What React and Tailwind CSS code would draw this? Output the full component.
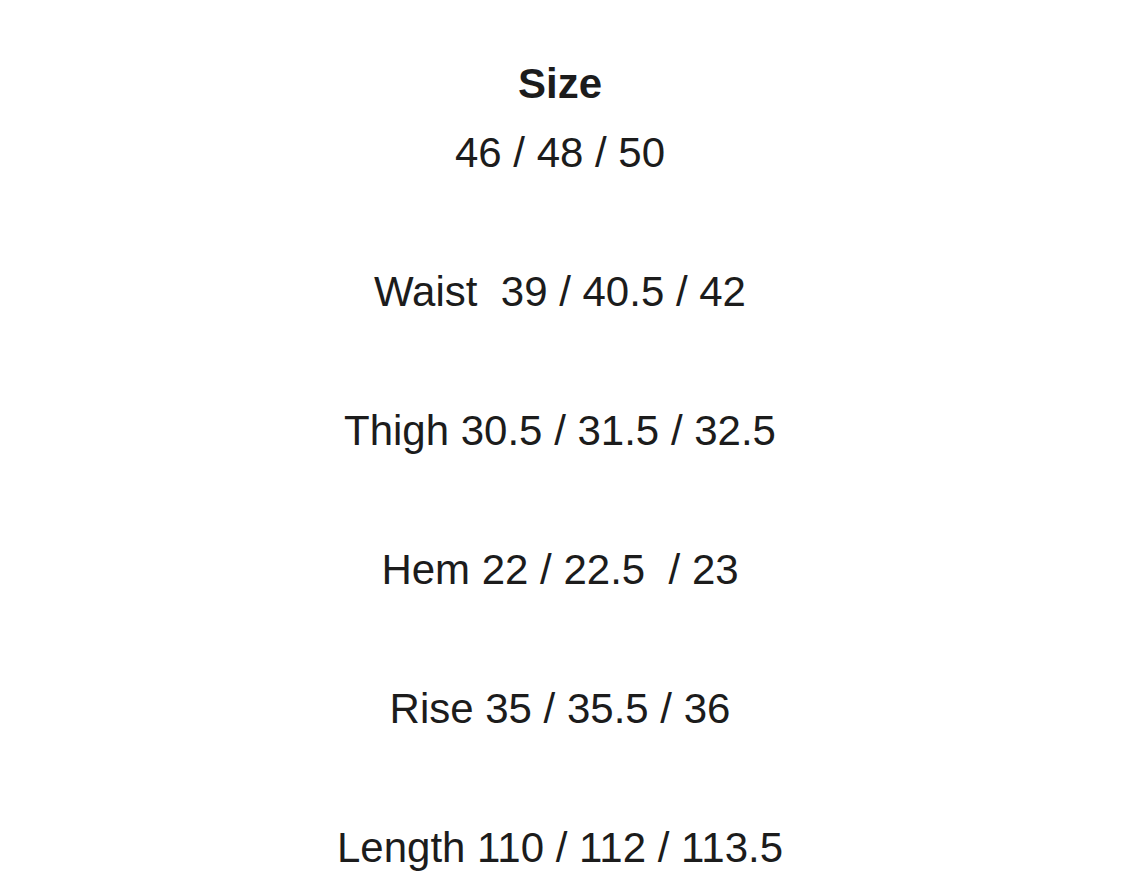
const rows = [
  "Waist  39 / 40.5 / 42",
  "Thigh 30.5 / 31.5 / 32.5",
  "Hem 22 / 22.5  / 23",
  "Rise 35 / 35.5 / 36",
  "Length 110 / 112 / 113.5",
];

export default function App() {
  return (
    <div className="min-h-[875px] w-full bg-white pt-[49px] pr-[5px] text-center text-[42px] leading-[69px] text-[#1c1c1c] font-['Liberation_Sans',Arial,sans-serif]">
      <div className="font-bold">Size</div>
      <div>46 / 48 / 50</div>
      {rows.map((row) => (
        <div key={row} className="mt-[70px] whitespace-pre">
          {row}
        </div>
      ))}
    </div>
  );
}
